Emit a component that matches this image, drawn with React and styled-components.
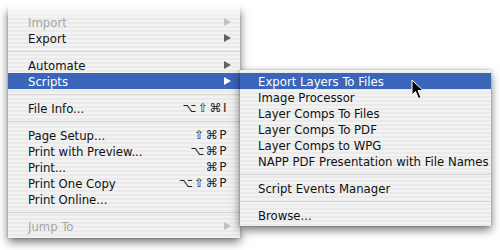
import styled, { createGlobalStyle } from "styled-components";

const Global = createGlobalStyle`
  html, body {
    margin: 0;
    padding: 0;
    background: #ffffff;
  }
  body {
    width: 500px;
    height: 250px;
    overflow: hidden;
    font-family: "DejaVu Sans Condensed", "DejaVu Sans", "Liberation Sans", sans-serif;
  }
`

const Stage = styled.div`
  position: relative;
  display: flex;
  align-items: flex-start;
  padding-left: 8px;
  width: 500px;
  height: 250px;
  box-sizing: border-box;
`

const Menu = styled.div`
  position: relative;
  box-sizing: border-box;
  flex: none;
  display: flex;
  flex-direction: column;
  width: ${p => p.w}px;
  margin-top: ${p => p.top}px;
  padding: ${p => p.pt}px 0 ${p => p.pb}px;
  background: repeating-linear-gradient(#f2f2f2 0 2px, #eaeaea 2px 4px);
  box-shadow: 0 4px 9px rgba(0, 0, 0, 0.55), 0 0 2px rgba(0, 0, 0, 0.25);
  z-index: ${p => p.z};
`

const TopFade = styled.div`
  position: absolute;
  left: -12px;
  right: -12px;
  top: 0;
  height: 18px;
  background: linear-gradient(#ffffff 0, rgba(255, 255, 255, 0.85) 6px, rgba(255, 255, 255, 0));
`

const Item = styled.div`
  display: flex;
  align-items: center;
  height: 16px;
  padding: 0 ${p => p.pr}px 0 ${p => p.pl}px;
  font-size: 13px;
  color: ${p => (p.active ? "#ffffff" : p.disabled ? "#a6a6a6" : "#111111")};
  background: ${p => (p.active ? "#3b65b8" : "transparent")};
  white-space: nowrap;
`

const Label = styled.span`
  flex: 1;
`

const Shortcut = styled.span`
  margin-right: 3px;
  font-family: "DejaVu Sans", sans-serif;
  font-size: 12px;
  letter-spacing: 1.5px;
  color: #222222;
`

const Arrow = styled.span`
  width: 0;
  height: 0;
  border-top: 4px solid transparent;
  border-bottom: 4px solid transparent;
  border-left: 7px solid ${p => (p.active ? "#ffffff" : p.disabled ? "#c2c2c2" : "#606060")};
`

const Separator = styled.div`
  height: 11px;
  display: flex;
  align-items: center;
  &::after {
    content: "";
    flex: 1;
    height: 1px;
    background: #d6d6d6;
  }
`

const Cursor = styled.svg`
  position: absolute;
  left: 411px;
  top: 79px;
  z-index: 5;
`

const mainItems = [
  { label: "Import", arrow: true, disabled: true },
  { label: "Export", arrow: true },
  "sep",
  { label: "Automate", arrow: true },
  { label: "Scripts", arrow: true, active: true },
  "sep",
  { label: "File Info...", key: "⌥⇧⌘I" },
  "sep",
  { label: "Page Setup...", key: "⇧⌘P" },
  { label: "Print with Preview...", key: "⌥⌘P" },
  { label: "Print...", key: "⌘P" },
  { label: "Print One Copy", key: "⌥⇧⌘P" },
  { label: "Print Online..." },
  "sep",
  { label: "Jump To", arrow: true, disabled: true },
]

const subItems = [
  { label: "Export Layers To Files", active: true },
  { label: "Image Processor" },
  { label: "Layer Comps To Files" },
  { label: "Layer Comps To PDF" },
  { label: "Layer Comps to WPG" },
  { label: "NAPP PDF Presentation with File Names" },
  "sep",
  { label: "Script Events Manager" },
  "sep",
  { label: "Browse..." },
]

function renderItems(items, pl, pr) {
  return items.map((it, i) =>
    it === "sep" ? (
      <Separator key={i} />
    ) : (
      <Item key={i} pl={pl} pr={pr} active={it.active} disabled={it.disabled}>
        <Label>{it.label}</Label>
        {it.key && <Shortcut>{it.key}</Shortcut>}
        {it.arrow && <Arrow active={it.active} disabled={it.disabled} />}
      </Item>
    )
  )
}

export default function App() {
  return (
    <>
      <Global />
      <Stage>
        <Menu w={232} top={0} pt={14} pb={4} z={1}>
          {renderItems(mainItems, 20, 9)}
          <TopFade />
        </Menu>
        <Menu w={251} top={70} pt={3} pb={3} z={2}>
          {renderItems(subItems, 18, 10)}
        </Menu>
        <Cursor width="14" height="22" viewBox="0 0 14 22">
          <path
            d="M1 1 L1 16 L4.5 12.5 L7.5 19.5 L10 18.5 L7 11.5 L12 11.5 Z"
            fill="#000000"
            stroke="#ffffff"
            strokeWidth="1"
            strokeLinejoin="round"
          />
        </Cursor>
      </Stage>
    </>
  )
}
